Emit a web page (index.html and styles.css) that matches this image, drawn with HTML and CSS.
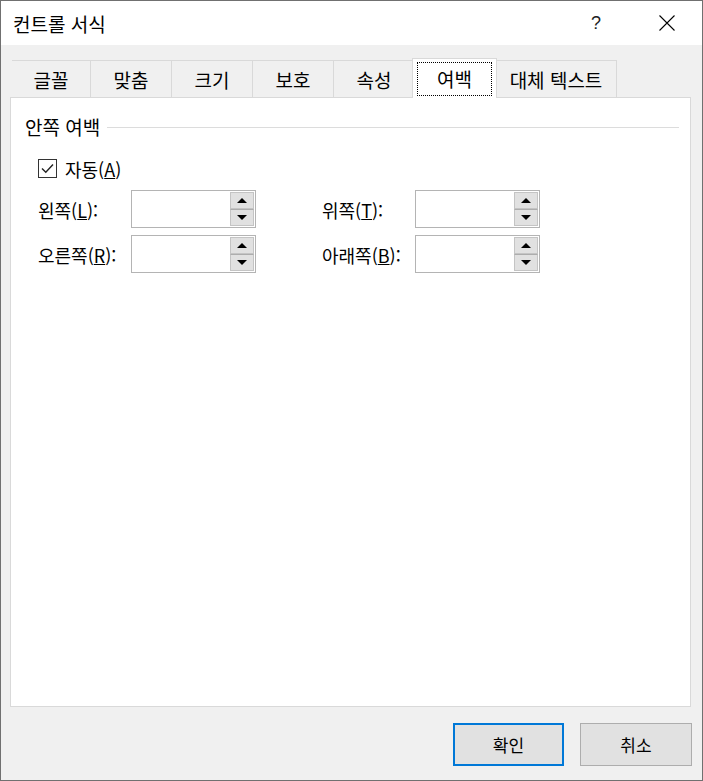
FILE: index.html
```html
<!DOCTYPE html>
<html lang="ko">
<head>
<meta charset="utf-8">
<title>컨트롤 서식</title>
<link rel="stylesheet" href="styles.css">
</head>
<body>
<div class="dialog">
  <div class="titlebar">
    <span class="title">컨트롤 서식</span>
    <span class="help">?</span>
    <span class="close">
      <svg width="16" height="16" viewBox="0 0 16 16"><path d="M0.5 0.5 L15.5 15.5 M15.5 0.5 L0.5 15.5" stroke="#000" stroke-width="1.1" fill="none"/></svg>
    </span>
  </div>
  <div class="body">
    <div class="tabs">
      <div class="tab first">글꼴</div>
      <div class="tab">맞춤</div>
      <div class="tab">크기</div>
      <div class="tab">보호</div>
      <div class="tab">속성</div>
      <div class="tab selected"><span class="focus">여백</span></div>
      <div class="tab last">대체 텍스트</div>
    </div>
    <div class="panel">
      <div class="group-head">
        <span class="group-label">안쪽 여백</span>
        <span class="rule"></span>
      </div>
      <div class="group-body">
        <div class="check">
          <span class="box">
            <svg width="17" height="17" viewBox="0 0 17 17"><path d="M3 8.5 L6.8 12.3 L14 4.5" stroke="#222" stroke-width="1.4" fill="none"/></svg>
          </span>
          <span class="check-label">자동(<u>A</u>)</span>
        </div>
        <div class="fields">
          <span class="flabel">왼쪽(<u>L</u>):</span>
          <div class="spin"><span class="spin-input"></span><span class="spin-btns"><span class="sbtn"><span class="tri up"></span></span><span class="sbtn"><span class="tri down"></span></span></span></div>
          <span class="gapcell"></span>
          <span class="flabel">위쪽(<u>T</u>):</span>
          <div class="spin"><span class="spin-input"></span><span class="spin-btns"><span class="sbtn"><span class="tri up"></span></span><span class="sbtn"><span class="tri down"></span></span></span></div>

          <span class="flabel">오른쪽(<u>R</u>):</span>
          <div class="spin"><span class="spin-input"></span><span class="spin-btns"><span class="sbtn"><span class="tri up"></span></span><span class="sbtn"><span class="tri down"></span></span></span></div>
          <span class="gapcell"></span>
          <span class="flabel">아래쪽(<u>B</u>):</span>
          <div class="spin"><span class="spin-input"></span><span class="spin-btns"><span class="sbtn"><span class="tri up"></span></span><span class="sbtn"><span class="tri down"></span></span></span></div>
        </div>
      </div>
    </div>
    <div class="buttons">
      <button class="btn primary">확인</button>
      <button class="btn">취소</button>
    </div>
  </div>
</div>
</body>
</html>
```

FILE: styles.css
```css
html, body {
  margin: 0;
  padding: 0;
  background: #f0f0f0;
}

body {
  font-family: "Noto Sans CJK KR", "Noto Sans", sans-serif;
  font-size: 18px;
  color: #000;
}

.dialog {
  width: 703px;
  height: 781px;
  box-sizing: border-box;
  border: 1px solid #707070;
  display: flex;
  flex-direction: column;
  background: #f0f0f0;
}

.titlebar {
  height: 44px;
  background: #fff;
  display: flex;
  align-items: center;
  padding-left: 12px;
  flex: none;
}

.title {
  font-size: 19px;
  line-height: 24px;
  flex: 1;
  padding-top: 1px;
}

.help {
  font-family: "Liberation Sans", sans-serif;
  font-size: 18px;
  width: 10px;
  margin-right: 58px;
  color: #222;
}

.close {
  display: flex;
  margin-right: 27px;
}

.body {
  flex: 1;
  display: flex;
  flex-direction: column;
  padding: 13px 11px 0 9px;
}

.tabs {
  display: flex;
  align-items: flex-end;
  height: 40px;
  margin-left: 2px;
  margin-bottom: -1px;
  position: relative;
  z-index: 1;
}

.tab {
  box-sizing: border-box;
  width: 81px;
  height: 37px;
  margin-bottom: 1px;
  border-top: 1px solid #d9d9d9;
  border-left: 1px solid #d9d9d9;
  background: #f0f0f0;
  display: flex;
  align-items: center;
  justify-content: center;
  font-size: 19px;
  line-height: 24px;
  padding-top: 1px;
}

.tab.first {
  width: 78px;
  border-left: none;
}

.tab.last {
  width: 122px;
  border-right: 1px solid #d9d9d9;
}

.tab.selected {
  width: 85px;
  height: 40px;
  margin: 0 -2px 0 -2px;
  background: #fff;
  border: 1px solid #d9d9d9;
  border-bottom: none;
  position: relative;
  z-index: 2;
  padding: 3px 4px 2px 4px;
  align-items: stretch;
}

.focus {
  flex: 1;
  border: 1px dotted #000;
  display: flex;
  align-items: center;
  justify-content: center;
}

.panel {
  box-sizing: border-box;
  height: 610px;
  background: #fff;
  border: 1px solid #d9d9d9;
  padding: 18px 11px 0 14px;
  flex: none;
}

.group-head {
  display: flex;
  align-items: center;
  height: 22px;
}

.group-label {
  padding-right: 7px;
  font-size: 19px;
  line-height: 22px;
}

.rule {
  flex: 1;
  height: 1px;
  background: #dcdcdc;
}

.group-body {
  padding-left: 13px;
}

.check {
  display: flex;
  align-items: center;
  margin-top: 21px;
  height: 19px;
}

.box {
  box-sizing: border-box;
  width: 19px;
  height: 19px;
  border: 1px solid #333;
  display: flex;
  align-items: center;
  justify-content: center;
  margin-right: 8px;
}

.check-label {
  line-height: 22px;
}

.fields {
  display: grid;
  grid-template-columns: 93px 125px 66px 93px 125px;
  grid-auto-rows: 38px;
  row-gap: 7px;
  margin-top: 12px;
  align-items: center;
}

.flabel {
  line-height: 22px;
  padding-top: 1px;
}

.spin {
  box-sizing: border-box;
  height: 38px;
  border: 1px solid #b4b4b4;
  background: #fff;
  display: flex;
  padding: 1px 1px 1px 0;
}

.spin-input {
  flex: 1;
}

.spin-btns {
  width: 24px;
  display: flex;
  flex-direction: column;
}

.sbtn {
  flex: 1;
  box-sizing: border-box;
  background: #e1e1e1;
  border: 1px solid #c4c4c4;
  display: flex;
  align-items: center;
  justify-content: center;
}

.sbtn + .sbtn {
  border-top: 1px solid #adadad;
}

.tri {
  width: 0;
  height: 0;
  border-left: 5px solid transparent;
  border-right: 5px solid transparent;
}

.tri.up {
  border-bottom: 5px solid #000;
}

.tri.down {
  border-top: 5px solid #000;
}

.buttons {
  display: flex;
  justify-content: flex-end;
  gap: 16px;
  margin-top: 16px;
  margin-right: -1px;
}

.btn {
  box-sizing: border-box;
  height: 43px;
  width: 112px;
  background: #e1e1e1;
  border: 1px solid #adadad;
  font-family: "Noto Sans CJK KR", "Noto Sans", sans-serif;
  font-size: 17px;
  color: #000;
  padding: 0;
}

.btn.primary {
  width: 111px;
  border: 2px solid #0078d7;
}
```
